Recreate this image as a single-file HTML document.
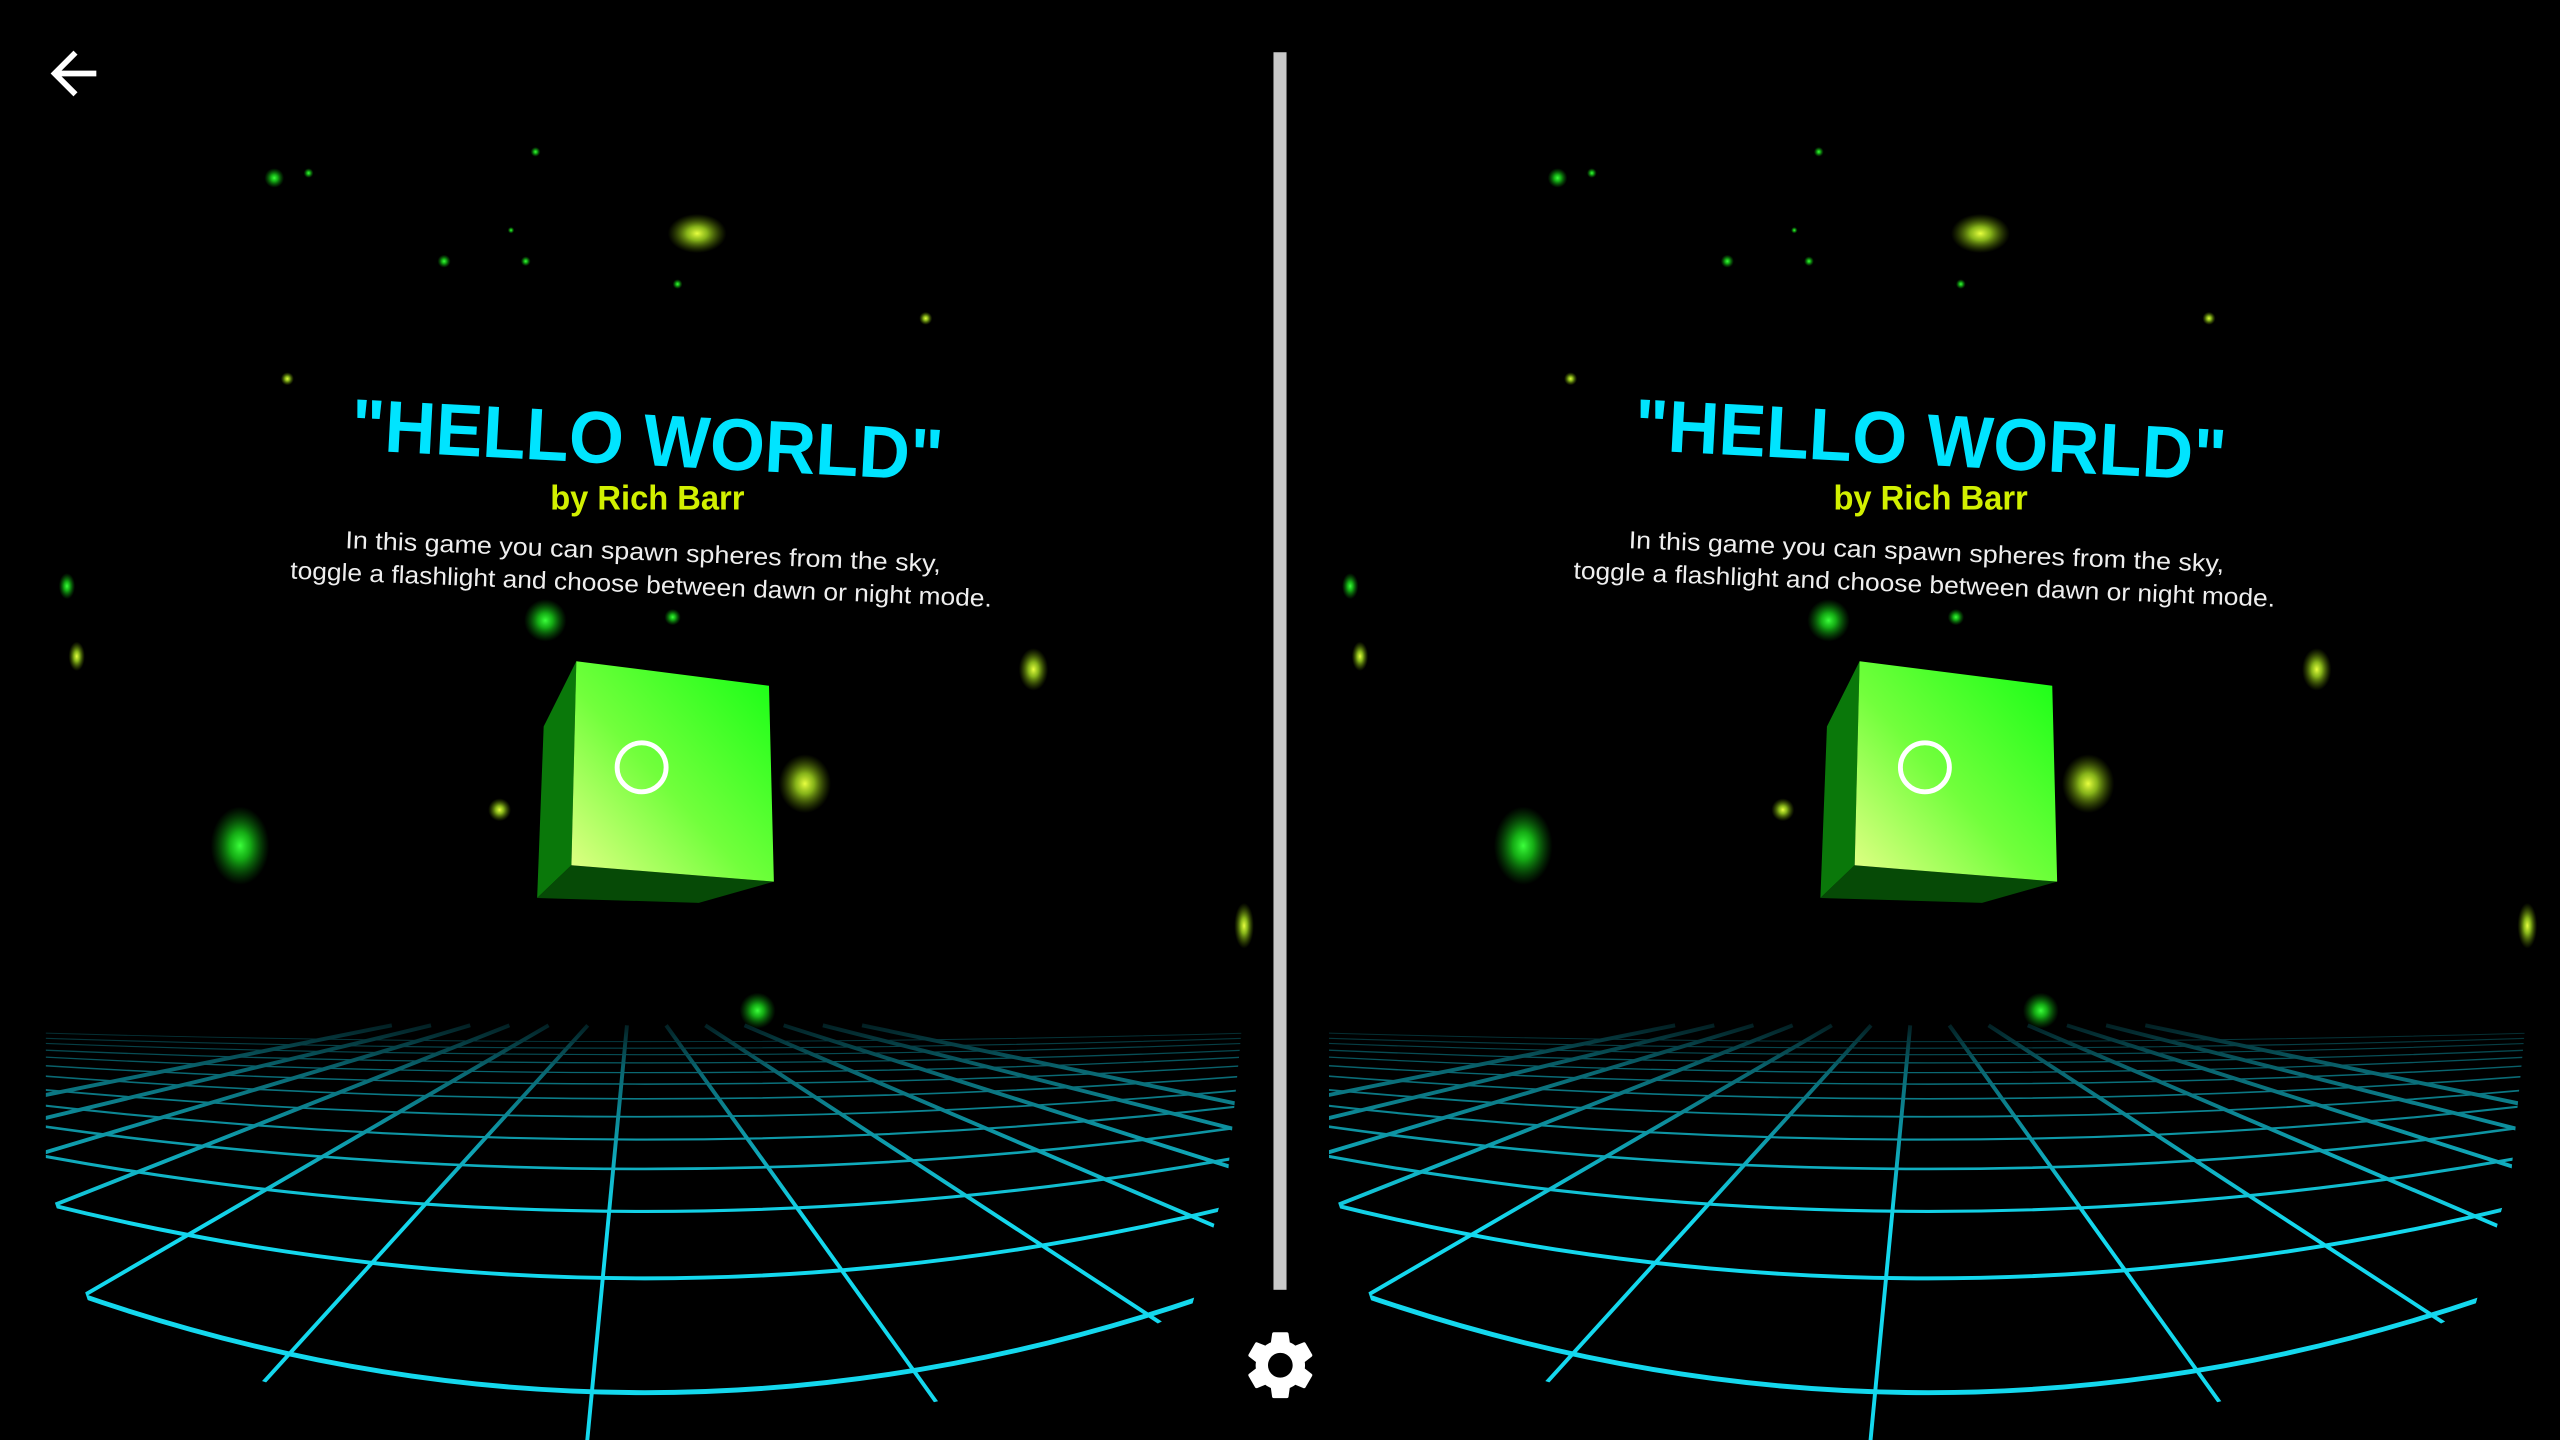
<!DOCTYPE html>
<html><head><meta charset="utf-8"><style>
html,body{margin:0;padding:0;background:#000;width:2560px;height:1440px;overflow:hidden}
svg{display:block}
text{font-family:"Liberation Sans",sans-serif}
</style></head><body>
<svg width="2560" height="1440" viewBox="0 0 1568 882" xmlns="http://www.w3.org/2000/svg">
<defs>
<radialGradient id="gg"><stop offset="0" stop-color="#3cff3c"/><stop offset=".35" stop-color="#1ad81a" stop-opacity=".8"/><stop offset="1" stop-color="#0a8a0a" stop-opacity="0"/></radialGradient>
<radialGradient id="gy"><stop offset="0" stop-color="#e8ff40"/><stop offset=".35" stop-color="#a8e020" stop-opacity=".8"/><stop offset="1" stop-color="#608a00" stop-opacity="0"/></radialGradient>
<linearGradient id="front" x1="0" y1="1" x2="1" y2="0"><stop offset="0" stop-color="#e6ff88"/><stop offset=".45" stop-color="#72ff3c"/><stop offset="1" stop-color="#14ff14"/></linearGradient>
<linearGradient id="hor" x1="0" y1="0" x2="0" y2="1"><stop offset="0" stop-color="#000"/><stop offset=".15" stop-color="#777"/><stop offset=".5" stop-color="#fff"/></linearGradient>
<clipPath id="lens"><path d="M28 615 L762 615 L752 720 L730 800 Q600 870 400 885 Q200 880 55 800 L28 720 Z"/></clipPath>
<mask id="m2" maskUnits="userSpaceOnUse" x="0" y="600" width="790" height="282"><rect x="0" y="615" width="790" height="267" fill="url(#hor)"/></mask>
<g id="eye">
 <g clip-path="url(#lens)"><g mask="url(#m2)" stroke="#14d8ee" fill="none">
  <path d="M0 775 Q395 931 790 775" stroke-width="3"/>
  <path d="M0 730 Q395 836 790 730" stroke-width="2.4"/>
  <path d="M0 703 Q395 781 790 703" stroke-width="1.9"/>
  <path d="M0 686 Q395 746 790 686" stroke-width="1.6"/>
  <path d="M0 674 Q395 722 790 674" stroke-width="1.3"/>
  <path d="M0 665 Q395 703 790 665" stroke-width="1.1"/>
  <path d="M0 657 Q395 689 790 657" stroke-width="1"/>
  <path d="M0 651 Q395 677 790 651" stroke-width=".9"/>
  <path d="M0 646 Q395 668 790 646" stroke-width=".8"/>
  <path d="M0 642 Q395 660 790 642" stroke-width=".8"/>
  <path d="M0 638 Q395 654 790 638" stroke-width=".7"/>
  <path d="M0 635 Q395 649 790 635" stroke-width=".7"/>
  <path d="M0 632 Q395 644 790 632" stroke-width=".6"/>
  <g stroke-width="2.4">
  <path d="M384 628 L358 900"/>
  <path d="M408 628 L603 900"/><path d="M360 628 L113 900"/>
  <path d="M432 628 L848 900"/><path d="M336 628 L-132 900"/>
  <path d="M456 628 L1093 900"/><path d="M312 628 L-377 900"/>
  <path d="M480 628 L1338 900"/><path d="M288 628 L-622 900"/>
  <path d="M504 628 L1583 900"/><path d="M264 628 L-867 900"/>
  <path d="M528 628 L1828 900"/><path d="M240 628 L-1112 900"/>
  </g>
 </g></g>
 <circle cx="168" cy="109" r="6" fill="url(#gg)"/><circle cx="189" cy="106" r="3" fill="url(#gg)"/>
 <circle cx="328" cy="93" r="3" fill="url(#gg)"/><ellipse cx="427" cy="143" rx="18" ry="12" fill="url(#gy)"/>
 <circle cx="272" cy="160" r="4" fill="url(#gg)"/><circle cx="322" cy="160" r="3" fill="url(#gg)"/>
 <circle cx="313" cy="141" r="2" fill="url(#gg)"/><circle cx="415" cy="174" r="3" fill="url(#gg)"/>
 <circle cx="567" cy="195" r="4" fill="url(#gy)"/><circle cx="176" cy="232" r="4" fill="url(#gy)"/>
 <ellipse cx="41" cy="359" rx="5" ry="8" fill="url(#gg)"/><ellipse cx="47" cy="402" rx="5" ry="9" fill="url(#gy)"/>
 <circle cx="334" cy="380" r="13" fill="url(#gg)"/><circle cx="412" cy="378" r="5" fill="url(#gg)"/>
 <ellipse cx="633" cy="410" rx="9" ry="13" fill="url(#gy)"/><ellipse cx="493" cy="480" rx="16" ry="18" fill="url(#gy)"/>
 <circle cx="306" cy="496" r="7" fill="url(#gy)"/><ellipse cx="147" cy="518" rx="18" ry="24" fill="url(#gg)"/>
 <ellipse cx="762" cy="567" rx="6" ry="14" fill="url(#gy)"/><circle cx="464" cy="619" r="11" fill="url(#gg)"/>
 <polygon points="353,405 333,445 329,550 350,530" fill="#0a780a"/>
 <polygon points="350,530 329,550 428,553 474,540" fill="#064a06"/>
 <polygon points="353,405 471,420 474,540 350,530" fill="url(#front)"/>
 <ellipse cx="393" cy="470" rx="15" ry="15" fill="none" stroke="#fff" stroke-width="3"/>
 <text x="215" y="285" transform="rotate(3 397 270)" font-size="45" font-weight="bold" fill="#00e4ff" textLength="363" lengthAdjust="spacingAndGlyphs">"HELLO WORLD"</text>
 <text x="337" y="312" font-size="21" font-weight="bold" fill="#d2f000" textLength="119" lengthAdjust="spacingAndGlyphs">by Rich Barr</text>
 <g transform="rotate(2.3 393 350)" fill="#eee" font-size="15">
  <text x="211" y="343" textLength="365" lengthAdjust="spacingAndGlyphs">In this game you can spawn spheres from the sky,</text>
  <text x="178" y="363" textLength="430" lengthAdjust="spacingAndGlyphs">toggle a flashlight and choose between dawn or night mode.</text>
 </g>
</g>
</defs>
<rect width="1568" height="882" fill="#000"/>
<use href="#eye"/>
<use href="#eye" transform="translate(786 0)"/>
<rect x="780" y="32" width="8" height="758" fill="#c8c8c8"/>
<path transform="translate(759 811) scale(2.1)" fill="#fff" d="M19.14 12.94c.04-.3.06-.61.06-.94 0-.32-.02-.64-.07-.94l2.03-1.58c.18-.14.23-.41.12-.61l-1.92-3.32c-.12-.22-.37-.29-.59-.22l-2.39.96c-.5-.38-1.03-.7-1.62-.94l-.36-2.54c-.04-.24-.24-.41-.48-.41h-3.84c-.24 0-.43.17-.47.41l-.36 2.54c-.59.24-1.130.57-1.62.94l-2.39-.96c-.22-.08-.47 0-.59.22L2.74 8.87c-.12.21-.08.47.12.61l2.03 1.58c-.05.3-.09.63-.09.94s.02.64.07.94l-2.03 1.58c-.18.14-.23.41-.12.61l1.92 3.32c.12.22.37.29.59.22l2.39-.96c.5.38 1.03.7 1.62.94l.36 2.54c.05.24.24.41.48.41h3.84c.24 0 .44-.17.47-.41l.36-2.54c.59-.24 1.13-.56 1.62-.94l2.39.96c.22.08.47 0 .59-.22l1.92-3.32c.12-.22.07-.47-.12-.61l-2.01-1.58zM12 15.6c-1.98 0-3.6-1.62-3.6-3.6s1.62-3.6 3.6-3.6 3.6 1.62 3.6 3.6-1.62 3.6-3.6 3.6z"/>
<path transform="translate(24 24) scale(1.75)" fill="#fff" d="M20 11H7.83l5.59-5.59L12 4l-8 8 8 8 1.41-1.41L7.83 13H20v-2z"/>
</svg>
</body></html>
